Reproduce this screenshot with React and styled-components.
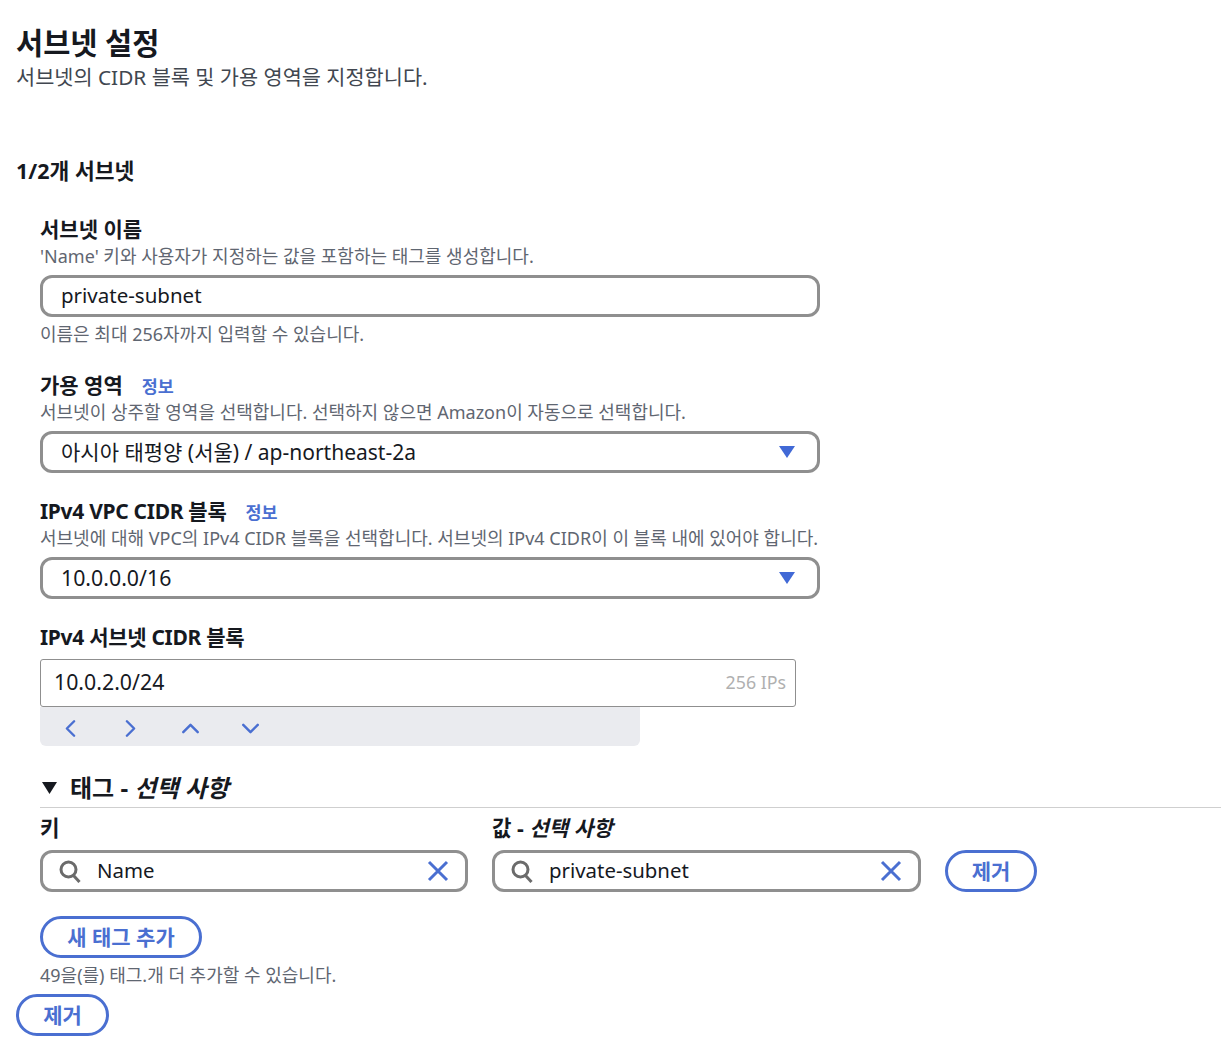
import styled, { createGlobalStyle } from "styled-components";
import { ChevronLeft, ChevronRight, ChevronUp, ChevronDown } from "lucide-react";

const GlobalStyle = createGlobalStyle`
  html, body {
    margin: 0;
    background: #fff;
  }
  body {
    font-family: "Noto Sans", "Noto Sans CJK KR", sans-serif;
    color: #16191f;
  }
`;

const Page = styled.div`
  width: 1229px;
  height: 1039px;
  box-sizing: border-box;
  padding: 24px 8px 0 16px;
  overflow: hidden;
`;

const Title = styled.h1`
  margin: 0;
  font-size: 29.5px;
  line-height: 38px;
  font-weight: 700;
`;

const Subtitle = styled.p`
  margin: 1px 0 0;
  font-size: 20.8px;
  line-height: 28px;
  color: #414750;
`;

const CountHeading = styled.h2`
  margin: 66px 0 0;
  font-size: 21.5px;
  line-height: 28px;
  font-weight: 700;
`;

const Fields = styled.div`
  padding-left: 24px;
`;

const Field = styled.div`
  margin-top: ${(p) => p.$top}px;
`;

const LabelRow = styled.div`
  display: flex;
  align-items: center;
  gap: 19px;
  height: 26px;
`;

const Label = styled.label`
  font-size: 21px;
  line-height: 26px;
  font-weight: 700;
  letter-spacing: ${(p) => (p.$tight ? "-0.3px" : "0")};
`;

const InfoLink = styled.a`
  font-size: 17.4px;
  font-weight: 700;
  color: #4a6fd1;
`;

const Hint = styled.div`
  margin-top: ${(p) => p.$top ?? 2}px;
  font-size: 18px;
  line-height: 24px;
  color: #5f6671;
  white-space: nowrap;
`;

const RoundInput = styled.div`
  box-sizing: border-box;
  display: flex;
  align-items: center;
  justify-content: space-between;
  width: 780px;
  height: 42px;
  margin-top: 7px;
  padding: 0 22px 2px 18px;
  border: 3px solid #8f8f8f;
  border-radius: 12px;
  font-size: ${(p) => p.$size}px;
  background: #fff;
`;

const Caret = styled.svg`
  width: 16px;
  height: 12px;
  margin-top: 2px;
  fill: #4169d6;
`;

const CidrInput = styled.div`
  box-sizing: border-box;
  display: flex;
  align-items: center;
  justify-content: space-between;
  width: 756px;
  height: 48px;
  margin-top: 9px;
  padding: 0 9px 3px 13px;
  border: 1px solid #8f8f8f;
  border-radius: 3px;
  font-size: 21.3px;
`;

const IpCount = styled.span`
  font-size: 17.8px;
  color: #b0b0b0;
`;

const CidrTools = styled.div`
  box-sizing: border-box;
  display: flex;
  align-items: center;
  width: 600px;
  height: 39px;
  padding-top: 3px;
  background: #eaebef;
  border-radius: 0 0 6px 6px;
`;

const ToolButton = styled.span`
  display: flex;
  justify-content: center;
  width: 60px;
  color: #4a6fd1;
`;

const TagsHeader = styled.div`
  display: flex;
  align-items: center;
  gap: 11px;
  height: 41px;
  margin-top: 20px;
  border-bottom: 1px solid #cfcfcf;
  font-size: 24px;
  font-weight: 700;
`;

const BlackCaret = styled.svg`
  width: 19px;
  height: 12px;
  margin-top: 2px;
  fill: #16191f;
`;

const Optional = styled.em`
  font-style: italic;
`;

const TagGrid = styled.div`
  display: grid;
  grid-template-columns: 428px 429px 92px;
  column-gap: 24px;
  align-items: end;
`;

const TagColumn = styled.div`
  display: flex;
  flex-direction: column;
`;

const TagLabel = styled.div`
  height: 42px;
  font-size: 21.2px;
  line-height: 40px;
  font-weight: 700;
`;

const SearchBox = styled.div`
  box-sizing: border-box;
  display: flex;
  align-items: center;
  height: 42px;
  padding: 0 15px 0 15px;
  border: 3px solid #8f8f8f;
  border-radius: 12px;
  font-size: 20.4px;
`;

const SearchValue = styled.span`
  flex: 1;
  margin: 0 0 2px 15px;
`;

const Pill = styled.button`
  box-sizing: border-box;
  display: block;
  width: ${(p) => p.$width}px;
  height: 42px;
  margin: ${(p) => p.$margin || 0};
  padding: 0 0 3px;
  border: 3px solid #4a6fd1;
  border-radius: 21px;
  background: #fff;
  color: #4a6fd1;
  font-family: inherit;
  font-size: 21px;
  font-weight: 700;
`;

const SearchIcon = () => (
  <svg width="24" height="24" viewBox="0 0 24 24" fill="none" stroke="#6b6b6b" strokeWidth="3">
    <circle cx="10.5" cy="10.5" r="7.5" />
    <path d="M15.5 16.5 L21.5 23" />
  </svg>
);

const ClearIcon = () => (
  <svg width="24" height="24" viewBox="0 0 24 24" fill="none" stroke="#4a6fd1" strokeWidth="3">
    <path d="M3 3 L21 21 M21 3 L3 21" />
  </svg>
);

const SelectCaret = () => (
  <Caret viewBox="0 0 16 12">
    <path d="M0 0 H16 L8 12 Z" />
  </Caret>
);

const App = () => (
  <Page>
    <GlobalStyle />
    <Title>서브넷 설정</Title>
    <Subtitle>서브넷의 CIDR 블록 및 가용 영역을 지정합니다.</Subtitle>
    <CountHeading>1/2개 서브넷</CountHeading>
    <Fields>
      <Field $top={31}>
        <LabelRow>
          <Label>서브넷 이름</Label>
        </LabelRow>
        <Hint>'Name' 키와 사용자가 지정하는 값을 포함하는 태그를 생성합니다.</Hint>
        <RoundInput $size={20.5}>private-subnet</RoundInput>
        <Hint $top={5}>이름은 최대 256자까지 입력할 수 있습니다.</Hint>
      </Field>
      <Field $top={26}>
        <LabelRow>
          <Label>가용 영역</Label>
          <InfoLink>정보</InfoLink>
        </LabelRow>
        <Hint>서브넷이 상주할 영역을 선택합니다. 선택하지 않으면 Amazon이 자동으로 선택합니다.</Hint>
        <RoundInput $size={21}>
          아시아 태평양 (서울) / ap-northeast-2a
          <SelectCaret />
        </RoundInput>
      </Field>
      <Field $top={25}>
        <LabelRow>
          <Label $tight>IPv4 VPC CIDR 블록</Label>
          <InfoLink>정보</InfoLink>
        </LabelRow>
        <Hint>서브넷에 대해 VPC의 IPv4 CIDR 블록을 선택합니다. 서브넷의 IPv4 CIDR이 이 블록 내에 있어야 합니다.</Hint>
        <RoundInput $size={21.3}>
          10.0.0.0/16
          <SelectCaret />
        </RoundInput>
      </Field>
      <Field $top={25}>
        <LabelRow>
          <Label $tight>IPv4 서브넷 CIDR 블록</Label>
        </LabelRow>
        <CidrInput>
          10.0.2.0/24
          <IpCount>256 IPs</IpCount>
        </CidrInput>
        <CidrTools>
          <ToolButton><ChevronLeft size={29} strokeWidth={2} /></ToolButton>
          <ToolButton><ChevronRight size={29} strokeWidth={2} /></ToolButton>
          <ToolButton><ChevronUp size={29} strokeWidth={2} /></ToolButton>
          <ToolButton><ChevronDown size={29} strokeWidth={2} /></ToolButton>
        </CidrTools>
      </Field>
      <TagsHeader>
        <BlackCaret viewBox="0 0 19 12">
          <path d="M2 0 H17 L9.5 12 Z" />
        </BlackCaret>
        <span>태그 - <Optional>선택 사항</Optional></span>
      </TagsHeader>
      <TagGrid>
        <TagColumn>
          <TagLabel>키</TagLabel>
          <SearchBox>
            <SearchIcon />
            <SearchValue>Name</SearchValue>
            <ClearIcon />
          </SearchBox>
        </TagColumn>
        <TagColumn>
          <TagLabel>값 - <Optional>선택 사항</Optional></TagLabel>
          <SearchBox>
            <SearchIcon />
            <SearchValue>private-subnet</SearchValue>
            <ClearIcon />
          </SearchBox>
        </TagColumn>
        <Pill $width={92}>제거</Pill>
      </TagGrid>
      <Pill $width={162} $margin="24px 0 0">새 태그 추가</Pill>
      <Hint $top={5}>49을(를) 태그.개 더 추가할 수 있습니다.</Hint>
    </Fields>
    <Pill $width={93} $margin="7px 0 0">제거</Pill>
  </Page>
);

export default App;
